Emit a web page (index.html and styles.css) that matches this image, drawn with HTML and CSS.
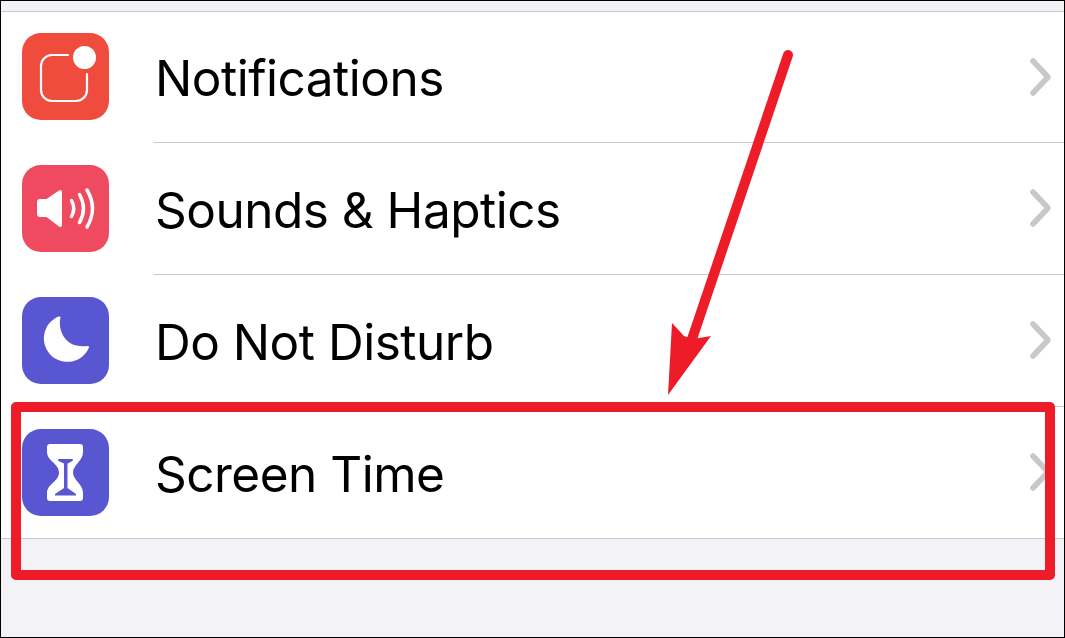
FILE: index.html
```html
<!DOCTYPE html>
<html lang="en">
<head>
<meta charset="utf-8">
<title>Settings</title>
<link rel="stylesheet" href="styles.css">
</head>
<body>
<main class="screen">
  <div class="top-gap"></div>
  <ul class="list">
    <li class="row">
      <svg class="icon" viewBox="0 0 87 87"><rect class="tile-red" width="87" height="87" rx="19"/><path class="line" d="M46 22H30a11 11 0 0 0-11 11v24a11 11 0 0 0 11 11h24a11 11 0 0 0 11-11V41"/><circle class="fill" cx="62.5" cy="24.5" r="11.5"/></svg>
      <div class="cell"><span class="label">Notifications</span><svg class="chev" viewBox="0 0 24 40"><path d="M4 4l15 16L4 36"/></svg></div>
    </li>
    <li class="row">
      <svg class="icon" viewBox="0 0 87 87"><rect class="tile-pink" width="87" height="87" rx="19"/><path class="fill" d="M18 34h6.500L37 25.500q3-1.500 3 1.500v33q0 3-3 1.500L24.500 52H18q-3 0-3-3V37q0-3 3-3z"/><path class="wave" d="M49.500 35.500q4.500 8 0 16"/><path class="wave" d="M57.500 29.500q8 14 0 28"/><path class="wave" d="M65 25q11 18.500 0 37"/></svg>
      <div class="cell"><span class="label">Sounds &amp; Haptics</span><svg class="chev" viewBox="0 0 24 40"><path d="M4 4l15 16L4 36"/></svg></div>
    </li>
    <li class="row">
      <svg class="icon" viewBox="0 0 87 87"><rect class="tile-indigo" width="87" height="87" rx="19"/><path class="fill" d="M38.500 20.500C35.500 33 43 52 65.500 49q2-.2 1.500 1.500A23.500 23.500 0 1 1 36.500 19.600q2-.6 2 .9z"/></svg>
      <div class="cell"><span class="label">Do Not Disturb</span><svg class="chev" viewBox="0 0 24 40"><path d="M4 4l15 16L4 36"/></svg></div>
    </li>
    <li class="row">
      <svg class="icon" viewBox="0 0 87 87"><rect class="tile-indigo" width="87" height="87" rx="19"/><path class="fill" d="M28 15h30q3 0 3 3v5c0 9-10 13-10 20.500S61 55 61 64v5q0 3-3 3H28q-3 0-3-3v-5c0-9 12-11.500 12-20.500S25 32 25 23v-5q0-3 3-3z"/><path class="tile-indigo" d="M36 30h15l-.5 2-5 2.500V59l8.500 6v1.500H33V65l9-6V34.500l-5.500-2.500z"/></svg>
      <div class="cell cell-last"><span class="label">Screen Time</span><svg class="chev" viewBox="0 0 24 40"><path d="M4 4l15 16L4 36"/></svg></div>
    </li>
  </ul>
  <svg class="markup" viewBox="0 0 1065 638">
    <rect class="box" x="16" y="407" width="1034" height="168"/>
    <path class="shaft" d="M788 55L690 345"/>
    <path class="head" d="M672 323L684 336L693 339L711 336L668 395z"/>
  </svg>
</main>
</body>
</html>
```
FILE: styles.css
```css
* { box-sizing: border-box; }
html, body { margin: 0; padding: 0; }
.screen {
  position: relative;
  width: 1065px;
  height: 638px;
  overflow: hidden;
  border: 1px solid #000;
  background: #f2f2f7;
  font-family: Inter, "Liberation Sans", sans-serif;
  color: #000;
}
.top-gap { height: 10px; }
.list {
  list-style: none;
  margin: 0;
  padding: 0;
  background: #fff;
  border-top: 1px solid #c8c7cc;
  border-bottom: 1px solid #c8c7cc;
}
.row {
  display: flex;
  align-items: flex-start;
  height: 132px;
  padding-left: 21px;
  gap: 45px;
}
.row:first-child, .row:last-child { height: 131px; }
.icon { flex: none; width: 87px; height: 87px; margin-top: 22px; }
.row:first-child .icon { margin-top: 21px; }
.cell {
  flex: 1;
  align-self: stretch;
  display: flex;
  align-items: center;
  justify-content: space-between;
  padding: 0 11px 1px 1px;
  border-bottom: 1px solid #c8c7cc;
}
.cell-last { border-bottom: 0; }
.label { padding-top: 3px; font-size: 49.5px; letter-spacing: -0.5px; font-weight: 380; }
.chev { flex: none; width: 24px; height: 40px; }
.chev path {
  fill: none;
  stroke: #c7c7cc;
  stroke-width: 5.500;
  stroke-linecap: round;
  stroke-linejoin: round;
}
.tile-red { fill: #f04c3e; }
.tile-pink { fill: #ef4a5f; }
.tile-indigo { fill: #5856d0; }
.fill { fill: #fff; }
.line { fill: none; stroke: #fff; stroke-width: 2.200; stroke-linecap: round; }
.wave { fill: none; stroke: #fff; stroke-width: 3.500; stroke-linecap: round; }
.markup { position: absolute; left: -1px; top: -1px; width: 1065px; height: 638px; }
.box { fill: none; stroke: #ed1c28; stroke-width: 10; stroke-linejoin: round; }
.shaft { fill: none; stroke: #ed1c28; stroke-width: 10; stroke-linecap: round; }
.head { fill: #ed1c28; }
```
